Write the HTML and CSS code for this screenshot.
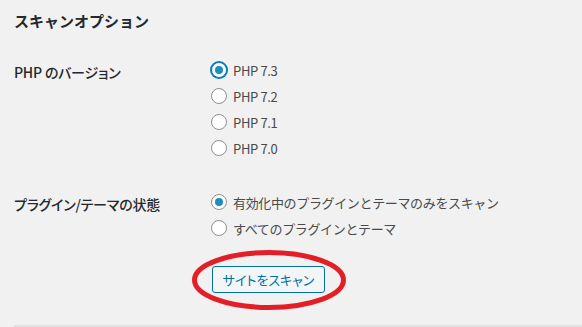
FILE: index.html
```html
<!DOCTYPE html>
<html>
<head>
  <meta charset="utf-8">
  <link rel="stylesheet" href="styles.css">
</head>
<body>
  <div class="wrap">
    <h2 class="title">スキャンオプション</h2>

    <div class="form-table">
      <div class="row">
        <div class="th">PHP のバージョン</div>
        <div class="td">
          <label class="opt"><input type="radio" name="php" class="focus" checked>PHP 7.3</label>
          <label class="opt"><input type="radio" name="php">PHP 7.2</label>
          <label class="opt"><input type="radio" name="php">PHP 7.1</label>
          <label class="opt"><input type="radio" name="php">PHP 7.0</label>
        </div>
      </div>

      <div class="row">
        <div class="th">プラグイン/テーマの状態</div>
        <div class="td">
          <label class="opt"><input type="radio" name="scope" checked>有効化中のプラグインとテーマのみをスキャン</label>
          <label class="opt"><input type="radio" name="scope">すべてのプラグインとテーマ</label>
        </div>
      </div>
    </div>

    <div class="submit">
      <button class="button">サイトをスキャン</button>
      <!-- red hand-drawn marker around the button -->
      <svg class="marker" width="156" height="62" viewBox="0 0 156 62">
        <ellipse cx="78" cy="31" rx="74.5" ry="27.5" fill="none" stroke="#e41e26" stroke-width="5"/>
      </svg>
    </div>

    <div class="sep"></div>
  </div>
</body>
</html>
```

FILE: styles.css
```css
body {
  margin: 0;
  background: #f1f1f1;
  font-family: "Noto Sans CJK JP", "Noto Sans", sans-serif;
  color: #23282d;
}

.wrap {
  padding-left: 14px;
}

.title {
  margin: 0;
  padding-top: 10px;
  font-size: 15px;
  line-height: 22px;
  font-weight: 700;
  color: #23282d;
}

.form-table {
  display: flex;
  flex-direction: column;
  gap: 28px;
  margin-top: 25px;
}

.row {
  display: grid;
  grid-template-columns: 197px 1fr;
}

.th {
  font-size: 14px;
  font-weight: 500;
  line-height: 26px;
  padding-top: 2px;
  letter-spacing: -0.2px;
  font-feature-settings: "palt";
}

.td {
  display: flex;
  flex-direction: column;
}

.opt {
  display: flex;
  align-items: center;
  gap: 6px;
  height: 26px;
  font-size: 13px;
  letter-spacing: -0.35px;
  color: #4a4a4a;
}

.opt input {
  appearance: none;
  -webkit-appearance: none;
  margin: 0;
  width: 16px;
  height: 16px;
  border: 1px solid #8c8f94;
  border-radius: 50%;
  background: #fff;
  display: flex;
  align-items: center;
  justify-content: center;
  flex-shrink: 0;
}

.opt input:checked::before {
  content: "";
  width: 8px;
  height: 8px;
  border-radius: 50%;
  background: #1e8cbe;
}

.opt input.focus {
  border-color: #007cba;
  box-shadow: 0 0 0 1px #007cba;
}

.submit {
  position: relative;
  margin: 25px 0 0 198px;
  width: 113px;
}

.button {
  display: block;
  width: 113px;
  height: 27px;
  padding: 0;
  border: 1px solid #0071a1;
  border-radius: 3px;
  background: #f3f5f6;
  color: #0071a1;
  font-family: inherit;
  font-size: 13px;
  white-space: nowrap;
  font-feature-settings: "palt";
}

.marker {
  position: absolute;
  left: -21px;
  top: -17px;
}

.sep {
  margin-top: 32px;
  border-top: 2px solid #e2e2e2;
}
```
